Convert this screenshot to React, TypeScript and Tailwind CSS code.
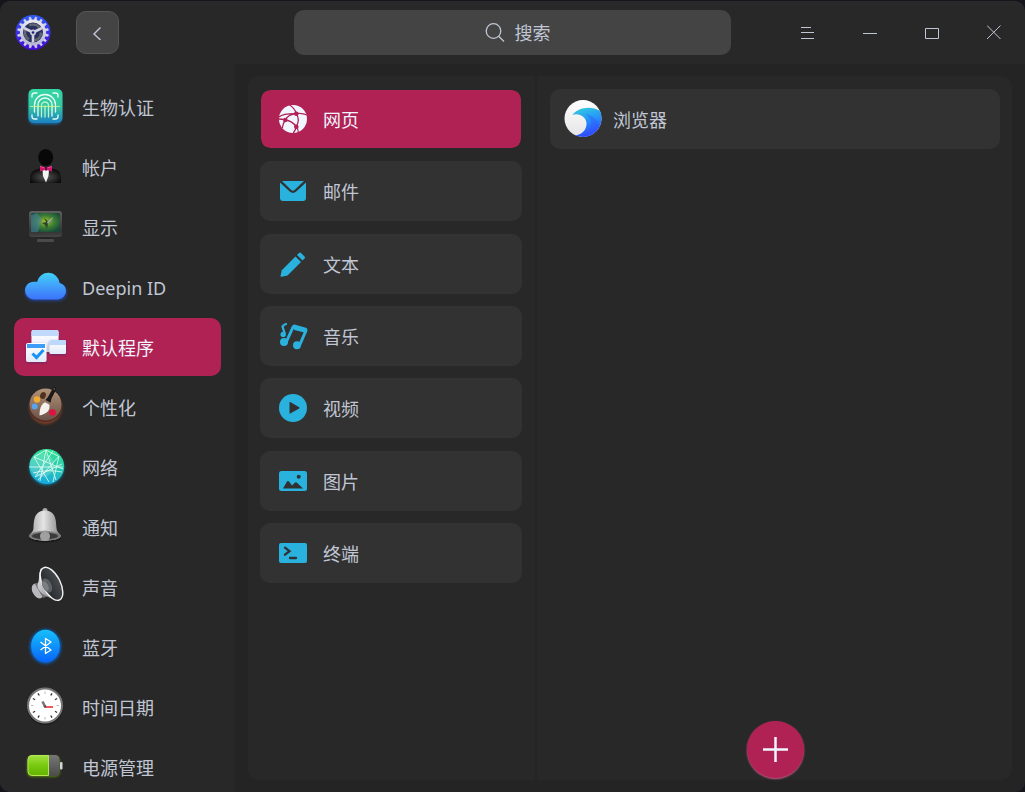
import { useState } from "react";
import type { ReactNode } from "react";

interface NavItem {
  id: string;
  label: string;
  icon: ReactNode;
}

const FingerprintIcon = () => (
  <svg viewBox="0 0 48 48" className="size-12 shrink-0" fill="none">
    <defs>
      <linearGradient id="finger" x1="0" y1="0" x2="0" y2="1">
        <stop offset="0" stopColor="#35d6a6" />
        <stop offset="0.5" stopColor="#35c9a0" />
        <stop offset="1" stopColor="#1c80c4" />
      </linearGradient>
      <filter id="fingerGlow" x="-30%" y="-30%" width="160%" height="160%">
        <feGaussianBlur stdDeviation="1.5" />
      </filter>
    </defs>
    <rect x="8" y="9" width="32" height="32" rx="5" fill="#1673b4" filter="url(#fingerGlow)" />
    <rect x="7.500" y="6" width="34" height="34" rx="5" fill="url(#finger)" />
    <g stroke="#e9fff3" strokeLinecap="round" strokeWidth="1.300">
      <path d="M11 14v-1.500a2.500 2.500 0 0 1 2.500-2.500H16M32 10h2.500a2.500 2.500 0 0 1 2.500 2.500V14M37 32v1.500a2.500 2.500 0 0 1-2.500 2.500H32M16 36h-2.500a2.500 2.500 0 0 1-2.500-2.500V32" />
      <path d="M13.500 29v-7a10.500 10.500 0 0 1 21 0v7M17 33V22a7 7 0 0 1 14 0v11" />
      <path d="M20.500 34V22.500a3.500 3.500 0 0 1 7 0V34M24 23v11" stroke="#b8f5cc" />
    </g>
    <path d="M9 23.500h30" stroke="#d6f58a" strokeWidth="0.8" />
  </svg>
);

const AccountIcon = () => (
  <svg viewBox="0 0 48 48" className="size-12 shrink-0">
    <defs>
      <radialGradient id="suit" cx="0.5" cy="0.6" r="0.55">
        <stop offset="0" stopColor="#555" />
        <stop offset="1" stopColor="#0c0c0c" />
      </radialGradient>
    </defs>
    <ellipse cx="24.700" cy="14.500" rx="7.500" ry="8.600" fill="#080808" />
    <path d="M9 40v-5c0-5 3-8 8-9l4-1h8l4 1c5 1 7 4 7 9v5z" fill="url(#suit)" />
    <path d="M21.500 27h6.500l-.5 6-2.500 6.500-3-6.500z" fill="#f4f4f4" />
    <path d="M19 23l5 1.500h1.500L31 23v5.500L25.500 27H24l-5 1.500z" fill="#d3146c" />
    <path d="M24 24h2v3.500h-2z" fill="#5c0831" />
    <path d="M19 23.500l4.500 1.300M31 23.500l-4.500 1.300" stroke="#ff5aa4" strokeWidth="0.8" />
  </svg>
);

const DisplayIcon = () => (
  <svg viewBox="0 0 48 48" className="size-12 shrink-0">
    <defs>
      <radialGradient id="screen" cx="0.5" cy="0.45" r="0.6">
        <stop offset="0" stopColor="#a9c623" />
        <stop offset="0.5" stopColor="#3f8035" />
        <stop offset="1" stopColor="#174a38" />
      </radialGradient>
      <linearGradient id="frame" x1="0" y1="0" x2="0" y2="1">
        <stop offset="0" stopColor="#606060" />
        <stop offset="0.8" stopColor="#343434" />
        <stop offset="1" stopColor="#454545" />
      </linearGradient>
    </defs>
    <path d="M20 33h9v4h-9z" fill="#232323" />
    <rect x="16" y="36" width="17" height="3" rx="1" fill="#4a4a4a" />
    <rect x="8" y="8" width="33" height="26" rx="3" fill="url(#frame)" />
    <rect x="10" y="10" width="29" height="19" rx="1.500" fill="url(#screen)" />
    <path d="M10 12l6-2 5 6-4 13h-6q-1 0-1-1z" fill="#4c82a4" opacity=".55" />
    <path d="M23 15l2 4-4 1 3 2 2 4 1-5 5-5-5 2z" fill="#294b28" />
    <path d="M26 19l6-5-1 3-4 4z" fill="#9aa9a0" />
  </svg>
);

const CloudIcon = () => (
  <svg viewBox="0 0 48 48" className="size-12 shrink-0">
    <defs>
      <linearGradient id="cloud" x1="0" y1="0" x2="0" y2="1">
        <stop offset="0" stopColor="#40d2f8" />
        <stop offset="0.55" stopColor="#429bfb" />
        <stop offset="1" stopColor="#3c73fb" />
      </linearGradient>
      <filter id="cloudGlow" x="-20%" y="-30%" width="140%" height="160%">
        <feGaussianBlur stdDeviation="1.6" />
      </filter>
    </defs>
    <path d="M12.500 38a8.500 8.500 0 0 1 0-17h25a8 8 0 0 1 0 17z" fill="#1f56d8" opacity=".6" filter="url(#cloudGlow)" />
    <path d="M13 36.500a9 9 0 0 1-9-9c0-5 4-9 9-8.800 1-.1 2 0 3 .3a11.500 11.500 0 0 1 22.700 1A8.500 8.500 0 0 1 45 28.200a8.500 8.500 0 0 1-8.500 8.300z" fill="url(#cloud)" />
  </svg>
);

const DefaultAppsIcon = () => (
  <svg viewBox="0 0 48 48" className="size-12 shrink-0" fill="none">
    <defs>
      <linearGradient id="pane" x1="0" y1="0" x2="0" y2="1">
        <stop offset="0" stopColor="#fff" />
        <stop offset="1" stopColor="#e3e9f8" />
      </linearGradient>
      <filter id="paneShadow" x="-20%" y="-20%" width="140%" height="150%">
        <feDropShadow dx="0" dy="1" stdDeviation="0.9" floodColor="#3c2a6e" floodOpacity="0.6" />
      </filter>
    </defs>
    <g filter="url(#paneShadow)">
      <rect x="10.500" y="7" width="27" height="22" rx="2" fill="url(#pane)" />
      <path d="M12.500 7h23a2 2 0 0 1 2 2v4h-27V9a2 2 0 0 1 2-2z" fill="#c1d9fb" />
    </g>
    <g filter="url(#paneShadow)">
      <rect x="28.500" y="17" width="16.500" height="14" rx="1.500" fill="url(#pane)" />
      <path d="M30 17h13.500a1.500 1.500 0 0 1 1.500 1.500V22H28.500v-3.500A1.500 1.500 0 0 1 30 17z" fill="#bed8fb" />
    </g>
    <g filter="url(#paneShadow)">
      <rect x="5" y="20" width="20.500" height="19" rx="2" fill="url(#pane)" />
      <rect x="6" y="21" width="18" height="4" fill="#3c9df8" />
      <path d="M11.500 30.500l4 4 7-7.500" stroke="#1593f6" strokeWidth="3" />
    </g>
  </svg>
);

const PaletteIcon = () => (
  <svg viewBox="0 0 48 48" className="size-12 shrink-0">
    <defs>
      <linearGradient id="wood" x1="0" y1="0" x2="0" y2="1">
        <stop offset="0" stopColor="#b29378" />
        <stop offset="1" stopColor="#6a5047" />
      </linearGradient>
      <filter id="woodGlow" x="-30%" y="-30%" width="160%" height="160%">
        <feGaussianBlur stdDeviation="1.800" />
      </filter>
    </defs>
    <circle cx="24.500" cy="25" r="16" fill="#9b4626" opacity=".8" filter="url(#woodGlow)" />
    <circle cx="24.500" cy="22.500" r="16.500" fill="#512b20" />
    <circle cx="24.500" cy="21.500" r="16" fill="url(#wood)" />
    <ellipse cx="22" cy="12.500" rx="2.800" ry="3.500" fill="#50301f" transform="rotate(20 22 12.500)" />
    <circle cx="16" cy="16.500" r="3.200" fill="#f2ac31" />
    <circle cx="13.700" cy="23.500" r="3" fill="#57a4ef" />
    <circle cx="31.500" cy="29.500" r="3.300" fill="#e0103f" />
    <path d="M24.500 17l5 2.800 1-4.300 4.700-9q.8-2-1-2.500-1.500-.3-2.500 1.500L27 14z" fill="#191919" />
    <circle cx="33.200" cy="6" r="0.700" fill="#888" />
    <path d="M22.500 20.200l1.500-1 4.500 2.500v1.800c0 4-2 7-10 9 0-4 .5-9.500 4-12.300z" fill="#f5f2ed" />
  </svg>
);

const NetworkIcon = () => (
  <svg viewBox="0 0 48 48" className="size-12 shrink-0" fill="none">
    <defs>
      <linearGradient id="mesh" x1="0.6" y1="0" x2="0.4" y2="1">
        <stop offset="0" stopColor="#30e494" />
        <stop offset="0.5" stopColor="#2dc8b4" />
        <stop offset="1" stopColor="#14a8e0" />
      </linearGradient>
      <clipPath id="meshClip">
        <circle cx="25.700" cy="23.500" r="17.500" />
      </clipPath>
      <filter id="meshGlow" x="-30%" y="-30%" width="160%" height="160%">
        <feGaussianBlur stdDeviation="1.400" />
      </filter>
    </defs>
    <circle cx="25.700" cy="25" r="17" fill="#0f7fa5" filter="url(#meshGlow)" />
    <circle cx="25.700" cy="23.500" r="17.500" fill="url(#mesh)" />
    <circle cx="21" cy="22" r="12" fill="#fff" opacity=".18" />
    <g clipPath="url(#meshClip)" stroke="#e4fff3" strokeWidth="0.800">
      <path d="M13 14l12-7 12 6M25 7l-6 31M25 7l10 30M13 14l29 12M32 8L14 34M38 13L17 37M8 24h34M14 34l27-13M13 14l15 25M38 13l-6 26" />
      <path d="M12 30q14-4 29-1" />
    </g>
  </svg>
);

const BellIcon = () => (
  <svg viewBox="0 0 48 48" className="size-12 shrink-0">
    <defs>
      <linearGradient id="bell" x1="0" y1="0" x2="1" y2="0">
        <stop offset="0" stopColor="#a4a4a4" />
        <stop offset="0.45" stopColor="#e4e4e4" />
        <stop offset="1" stopColor="#858585" />
      </linearGradient>
    </defs>
    <ellipse cx="24" cy="35" rx="16" ry="4.500" fill="#1a1a1a" />
    <ellipse cx="24" cy="7.500" rx="2.500" ry="2.500" fill="#aaa" />
    <path d="M8 33c1-3 4-3 4.500-8 .5-9 1-17 11.500-17.500C34.500 8 35 16 35.500 25c.5 5 3.500 5 4.500 8-1 6-31 6-32 0z" fill="url(#bell)" />
    <ellipse cx="24" cy="33" rx="16" ry="4.500" fill="#777" />
    <ellipse cx="24" cy="33" rx="13" ry="3.200" fill="#3b3b3b" />
    <path d="M19 33q0-4 5-4t5 4q0 5-5 5t-5-5z" fill="#a0a0a0" />
    <path d="M12 29.500q12-3 24 0" fill="none" stroke="#909090" strokeWidth="1" />
  </svg>
);

const SpeakerIcon = () => (
  <svg viewBox="0 0 48 48" className="size-12 shrink-0">
    <defs>
      <linearGradient id="horn" x1="0" y1="0" x2="1" y2="1">
        <stop offset="0" stopColor="#eeeeee" />
        <stop offset="1" stopColor="#77787c" />
      </linearGradient>
      <linearGradient id="hornInside" x1="0" y1="0" x2="1" y2="0">
        <stop offset="0" stopColor="#25282b" />
        <stop offset="1" stopColor="#484b4f" />
      </linearGradient>
    </defs>
    <ellipse cx="16.500" cy="28" rx="5" ry="8" fill="#b8b8bd" transform="rotate(-28 16.500 28)" />
    <path d="M14 21l6-3 7 15-5 2z" fill="#717176" />
    <path d="M20 5c-3 7-1 11-3.500 17 0 6 6 10 13 13l10 2z" fill="url(#horn)" />
    <ellipse cx="30.500" cy="20.800" rx="8.800" ry="18" fill="url(#hornInside)" stroke="#f3f3f3" strokeWidth="1.400" transform="rotate(-27 30.500 20.800)" />
    <ellipse cx="26" cy="22.500" rx="4.500" ry="7.500" fill="#5d6064" transform="rotate(-27 26 22.500)" />
    <ellipse cx="24.500" cy="23" rx="2.500" ry="5" fill="#7c7e82" transform="rotate(-27 24.500 23)" />
  </svg>
);

const BluetoothIcon = () => (
  <svg viewBox="0 0 48 48" className="size-12 shrink-0" fill="none">
    <defs>
      <linearGradient id="blue" x1="0" y1="0" x2="0" y2="1">
        <stop offset="0" stopColor="#16c0fa" />
        <stop offset="1" stopColor="#0865fb" />
      </linearGradient>
      <filter id="blueGlow" x="-30%" y="-30%" width="160%" height="160%">
        <feGaussianBlur stdDeviation="1.400" />
      </filter>
    </defs>
    <ellipse cx="24.500" cy="23.500" rx="15.500" ry="17" fill="#0868d4" filter="url(#blueGlow)" />
    <ellipse cx="24.500" cy="23" rx="14.300" ry="16.300" fill="url(#blue)" />
    <path d="M19.500 19l10.500 8-5.500 3.500V15.500l5.500 3.500-10.500 8" stroke="#fff" strokeWidth="1.300" strokeLinejoin="round" />
  </svg>
);

const ClockIcon = () => (
  <svg viewBox="0 0 48 48" className="size-12 shrink-0" fill="none">
    <circle cx="24" cy="24" r="18" fill="#1b1b1b" />
    <circle cx="24" cy="22.500" r="17" fill="#fff" stroke="#777" strokeWidth="2" />
    <g stroke="#333" strokeWidth="1.300">
      {[30, 60, 120, 150, 210, 240, 300, 330].map((angle) => (
        <path key={angle} d="M24 8.500v2.500" transform={`rotate(${angle} 24 22.500)`} />
      ))}
    </g>
    <path d="M24 8.500v2.500M24 34v2.500M10 22.500h2.500M35.500 22.500H38" stroke="#bbb" strokeWidth="1" />
    <path d="M24 23.500l-2.500-5" stroke="#777" strokeWidth="2.500" />
    <path d="M24 24h8" stroke="#f15a5a" strokeWidth="2" />
    <circle cx="24" cy="23.500" r="1.300" fill="#555" />
  </svg>
);

const BatteryIcon = () => (
  <svg viewBox="0 0 48 48" className="size-12 shrink-0">
    <defs>
      <linearGradient id="charge" x1="0" y1="0" x2="0" y2="1">
        <stop offset="0" stopColor="#a3e044" />
        <stop offset="0.45" stopColor="#7ccb13" />
        <stop offset="1" stopColor="#62b400" />
      </linearGradient>
      <linearGradient id="cell" x1="0" y1="0" x2="0" y2="1">
        <stop offset="0" stopColor="#777" />
        <stop offset="1" stopColor="#4b4b4b" />
      </linearGradient>
      <filter id="chargeGlow" x="-20%" y="-30%" width="140%" height="160%">
        <feGaussianBlur stdDeviation="1.200" />
      </filter>
    </defs>
    <rect x="6" y="13" width="33" height="21" rx="5" fill="#517a08" filter="url(#chargeGlow)" />
    <rect x="6.500" y="12" width="32" height="21" rx="4.500" fill="url(#cell)" />
    <path d="M11 12.500h16.500v20H11A4 4 0 0 1 7 28.500v-12a4 4 0 0 1 4-4z" fill="url(#charge)" stroke="#b5e84f" strokeWidth="1" />
    <rect x="39" y="19" width="2.500" height="7.500" rx="1" fill="#d5d5d5" />
  </svg>
);

const WebIcon = () => (
  <svg viewBox="0 0 30 30" className="size-[30px] shrink-0" fill="none">
    <circle cx="15" cy="15" r="14" fill="#f0f5ff" />
    <g stroke="#b12254" strokeWidth="1.300">
      <path d="M11.500 1q5 3 7 8.700M18.300 9.700q5-1 11 1.300M18.300 9.700Q10 10.500 7.300 16M7.300 16q-3-1-7-1M18.300 9.700q4 6 0 13M7.300 16q7 1 11 6.700M18.300 22.700q-.5 3-3 6.500M7.300 16q-2.500 3.500-3 8M1 13Q5 9.500 18.300 9.700" />
      <path d="M18.300 22.700q2 2.500 2 6" />
    </g>
    <g fill="#b12254">
      <circle cx="18.300" cy="9.700" r="2.300" />
      <circle cx="7.300" cy="16" r="2.300" />
      <circle cx="18.300" cy="22.700" r="2.300" />
    </g>
  </svg>
);

const MailIcon = () => (
  <svg viewBox="0 0 30 30" className="size-[30px] shrink-0" fill="#29b2de">
    <path d="M4 5h22l-9.500 9a2.500 2.500 0 0 1-3.300 0z" />
    <path d="M2 6.500l9.700 9a5 5 0 0 0 6.500 0l9.800-9V22a3 3 0 0 1-3 3H5a3 3 0 0 1-3-3z" />
  </svg>
);

const PencilIcon = () => (
  <svg viewBox="0 0 30 30" className="size-[30px] shrink-0" fill="#29b2de">
    <path d="M17.500 7.500l5.500 5.500L9.500 26.500l-5.700 1.300q-1.400.3-1.200-1.200l1.200-5.400z" />
    <path d="M19 6l2-2q1-1 2 0l3.500 3.500q1 1 0 2l-2 2z" />
  </svg>
);

const MusicIcon = () => (
  <svg viewBox="0 0 30 30" className="size-[30px] shrink-0" fill="none">
    <g fill="#29b2de">
      <circle cx="6" cy="21" r="4" />
      <circle cx="19" cy="24.200" r="4" />
      <circle cx="5.200" cy="13.400" r="2.700" />
      <path d="M14.500 5q.8-1.800 2.800-1.300L28 6.800q2 .7 1.300 2.700l-1 2.500-12-3z" />
    </g>
    <path d="M8.500 20.500L15.500 5M28 9.500L21.700 24" stroke="#29b2de" strokeWidth="3" />
    <path d="M6.500 12L4.500 5.500Q6 3.500 8 3" stroke="#29b2de" strokeWidth="2.300" strokeLinecap="round" strokeLinejoin="round" />
  </svg>
);

const VideoIcon = () => (
  <svg viewBox="0 0 30 30" className="size-[30px] shrink-0">
    <circle cx="15" cy="15" r="14" fill="#29b2de" />
    <path d="M11.500 9.500q0-.8.700-.5l9 5.200q.8.800 0 1.300l-9 5q-.7.300-.7-.5z" fill="#313131" />
  </svg>
);

const PictureIcon = () => (
  <svg viewBox="0 0 30 30" className="size-[30px] shrink-0">
    <rect x="1" y="5" width="28" height="20" rx="2.500" fill="#29b2de" />
    <circle cx="20.700" cy="10.700" r="2" fill="#313131" />
    <path d="M5 22.500l4-7q1-1.200 2 0l3 4 2.500-2.500q1.500-1.500 2.800 0L25 22.500z" fill="#313131" />
  </svg>
);

const TerminalIcon = () => (
  <svg viewBox="0 0 30 30" className="size-[30px] shrink-0" fill="none">
    <rect x="1" y="5" width="28" height="20" rx="2" fill="#29b2de" />
    <path d="M7 9.700l4.500 3.500L7 16.700M12 20h6" stroke="#313131" strokeWidth="2.300" strokeLinecap="round" />
  </svg>
);

const BrowserIcon = () => (
  <svg viewBox="0 0 38 38" className="size-[38px] shrink-0">
    <defs>
      <linearGradient id="wave" x1="0.3" y1="0" x2="0.6" y2="1">
        <stop offset="0" stopColor="#32c7df" />
        <stop offset="0.4" stopColor="#2697f9" />
        <stop offset="1" stopColor="#3038ff" />
      </linearGradient>
      <linearGradient id="paper" x1="0" y1="0" x2="0" y2="1">
        <stop offset="0" stopColor="#ffffff" />
        <stop offset="1" stopColor="#e4e4e6" />
      </linearGradient>
      <clipPath id="waveClip">
        <circle cx="19" cy="18.500" r="18.500" />
      </clipPath>
    </defs>
    <circle cx="19" cy="18.500" r="18.500" fill="url(#paper)" />
    <g clipPath="url(#waveClip)">
      <path d="M8.500 15C13 8 27 5 36 11l4 10-9 17H14c-1-2-3-2-4-2.700C17 36 23 30 22.500 23 22 17 15 12.500 8.500 15z" fill="url(#wave)" />
      <path d="M22 14c7 5 8 14-3 24h9c10-10 8-20-6-24z" fill="#3455ff" opacity=".4" />
    </g>
  </svg>
);

const LogoIcon = () => (
  <svg viewBox="0 0 36 36" className="size-9 shrink-0" fill="none">
    <defs>
      <linearGradient id="disc" x1="0" y1="0" x2="0" y2="1">
        <stop offset="0" stopColor="#2f5bf5" />
        <stop offset="1" stopColor="#4408d8" />
      </linearGradient>
      <linearGradient id="gear" x1="0" y1="0" x2="0" y2="1">
        <stop offset="0" stopColor="#e8e8ee" />
        <stop offset="1" stopColor="#b8b8d4" />
      </linearGradient>
    </defs>
    <circle cx="18" cy="17.500" r="17.500" fill="url(#disc)" />
    {Array.from({ length: 16 }, (_, i) => (
      <path key={i} d="M16.800 6l.4-3.500h1.600l.4 3.500z" fill="#d5d5e5" stroke="#d5d5e5" strokeWidth="0.6" transform={`translate(0 -0.500) rotate(${i * 22.5 + 11} 18 18)`} />
    ))}
    <circle cx="18" cy="17.500" r="11.500" stroke="url(#gear)" strokeWidth="3" fill="#29305c" />
    <circle cx="18" cy="17.500" r="8" stroke="#5f6672" strokeWidth="2.600" strokeDasharray="11 5.750" />
    <path d="M18 17.500v10M18 17.500l-9-4.500M18 17.500l9-4.500" stroke="#d2d2e2" strokeWidth="2.600" />
    <circle cx="18" cy="17.500" r="3" fill="#c9c9dd" />
    <circle cx="18" cy="17.500" r="1.300" fill="#1c2275" />
  </svg>
);

const modules: NavItem[] = [
  { id: "biometric", label: "生物认证", icon: <FingerprintIcon /> },
  { id: "accounts", label: "帐户", icon: <AccountIcon /> },
  { id: "display", label: "显示", icon: <DisplayIcon /> },
  { id: "deepinid", label: "Deepin ID", icon: <CloudIcon /> },
  { id: "defapp", label: "默认程序", icon: <DefaultAppsIcon /> },
  { id: "personalization", label: "个性化", icon: <PaletteIcon /> },
  { id: "network", label: "网络", icon: <NetworkIcon /> },
  { id: "notification", label: "通知", icon: <BellIcon /> },
  { id: "sound", label: "声音", icon: <SpeakerIcon /> },
  { id: "bluetooth", label: "蓝牙", icon: <BluetoothIcon /> },
  { id: "datetime", label: "时间日期", icon: <ClockIcon /> },
  { id: "power", label: "电源管理", icon: <BatteryIcon /> },
];

const categories: NavItem[] = [
  { id: "web", label: "网页", icon: <WebIcon /> },
  { id: "mail", label: "邮件", icon: <MailIcon /> },
  { id: "text", label: "文本", icon: <PencilIcon /> },
  { id: "music", label: "音乐", icon: <MusicIcon /> },
  { id: "video", label: "视频", icon: <VideoIcon /> },
  { id: "picture", label: "图片", icon: <PictureIcon /> },
  { id: "terminal", label: "终端", icon: <TerminalIcon /> },
];

const windowButtons = [
  { label: "菜单", d: "M0 2.500h10M0 7.500h13M0 13.500h13" },
  { label: "最小化", d: "M0 8.500h14" },
  { label: "最大化", d: "M.5 3.500h13v10H.5z" },
  { label: "关闭", d: "M0 .5l13.500 13.500M13.500 .5L0 14" },
];

function TitleBar() {
  return (
    <header className="flex h-[63px] shrink-0 items-center bg-[#282828] pl-[15px]">
      <LogoIcon />
      <button
        aria-label="返回"
        className="ml-[25px] flex size-[43px] shrink-0 items-center justify-center rounded-[10px] border border-[#565656] bg-[#444] text-[#c0c6d4]"
      >
        <svg viewBox="0 0 14 14" className="size-3.5" fill="none" stroke="currentColor" strokeWidth="1.400">
          <path d="M9.500 1.500L3 8l6.500 6" />
        </svg>
      </button>
      <label className="ml-[175px] flex h-[45px] flex-1 items-center justify-center gap-2.5 rounded-[10px] bg-[#444] pl-2.5 text-[#c0c6d4]">
        <svg viewBox="0 0 20 20" className="size-5 shrink-0" fill="none" stroke="currentColor" strokeWidth="1.300">
          <circle cx="8.500" cy="8" r="7.300" />
          <path d="M13.700 13.200l5.300 5.300" />
        </svg>
        <input
          type="text"
          aria-label="搜索"
          placeholder="搜索"
          className="field-sizing-content bg-transparent pb-0.5 outline-none placeholder:text-[#c0c6d4]"
        />
      </label>
      <div className="ml-[46px] flex shrink-0">
        {windowButtons.map((button) => (
          <button key={button.label} aria-label={button.label} className="flex h-[63px] w-[62px] items-center justify-center">
            <svg viewBox="0 0 14 15" className="h-[15px] w-3.5" fill="none" stroke="#c0c6d4">
              <path d={button.d} />
            </svg>
          </button>
        ))}
      </div>
    </header>
  );
}

export default function App() {
  const [activeModule, setActiveModule] = useState("defapp");
  const [activeCategory, setActiveCategory] = useState("web");

  return (
    <div className="h-screen overflow-hidden bg-[#15151c] pt-px font-['Noto_Sans','Noto_Sans_CJK_SC',sans-serif] text-lg/6 text-[#c0c6d4]">
      <div className="flex h-full flex-col overflow-hidden rounded-[10px] bg-[#242424]">
        <TitleBar />
        <div className="flex min-h-0 flex-1">
          <nav className="flex w-[235px] shrink-0 flex-col gap-0.5 overflow-hidden bg-[#282828] px-3.5 pt-3.5">
            {modules.map((item) => (
              <button
                key={item.id}
                onClick={() => setActiveModule(item.id)}
                className={`flex h-[58px] shrink-0 items-center gap-[13px] rounded-[10px] pl-[7px] text-left ${
                  activeModule === item.id ? "bg-[#b12254] text-[#f0f5ff]" : ""
                }`}
              >
                {item.icon}
                <span className="pt-0.5">{item.label}</span>
              </button>
            ))}
          </nav>

          <main className="mt-3 mr-[13px] mb-3 ml-[13px] flex min-w-0 flex-1 gap-0.5">
            <section className="w-[287px] shrink-0 rounded-l-[10px] bg-[#282828] pt-[13px] pr-[13px] pl-3">
              <div className="flex h-[494px] flex-col justify-between">
                {categories.map((item) => (
                  <button
                    key={item.id}
                    onClick={() => setActiveCategory(item.id)}
                    className={`flex h-[60px] items-center gap-[15px] rounded-[10px] text-left ${
                      activeCategory === item.id
                        ? "border border-[#282828] bg-[#b12254] bg-clip-padding pl-[17px] text-[#f0f5ff]"
                        : "bg-[#323232] pl-[18px]"
                    }`}
                  >
                    {item.icon}
                    <span className="pt-0.5">{item.label}</span>
                  </button>
                ))}
              </div>
            </section>

            <section className="flex min-w-0 flex-1 flex-col rounded-r-[10px] bg-[#282828] pt-[13px] pr-3 pl-[13px]">
              <button className="flex h-[60px] items-center gap-[11px] rounded-[10px] bg-[#323232] pl-3.5 text-left">
                <BrowserIcon />
                <span className="pt-0.5">浏览器</span>
              </button>
              <button
                aria-label="添加"
                className="mt-auto mb-0.5 flex size-[57px] items-center justify-center self-center rounded-full bg-[#b12254] shadow-[0_1px_2px_#d05b87]"
              >
                <svg viewBox="0 0 25 25" className="size-[25px]" stroke="#f0f5ff" strokeWidth="2.500">
                  <path d="M12.500 0v25M0 12.500h25" />
                </svg>
              </button>
            </section>
          </main>
        </div>
      </div>
    </div>
  );
}
